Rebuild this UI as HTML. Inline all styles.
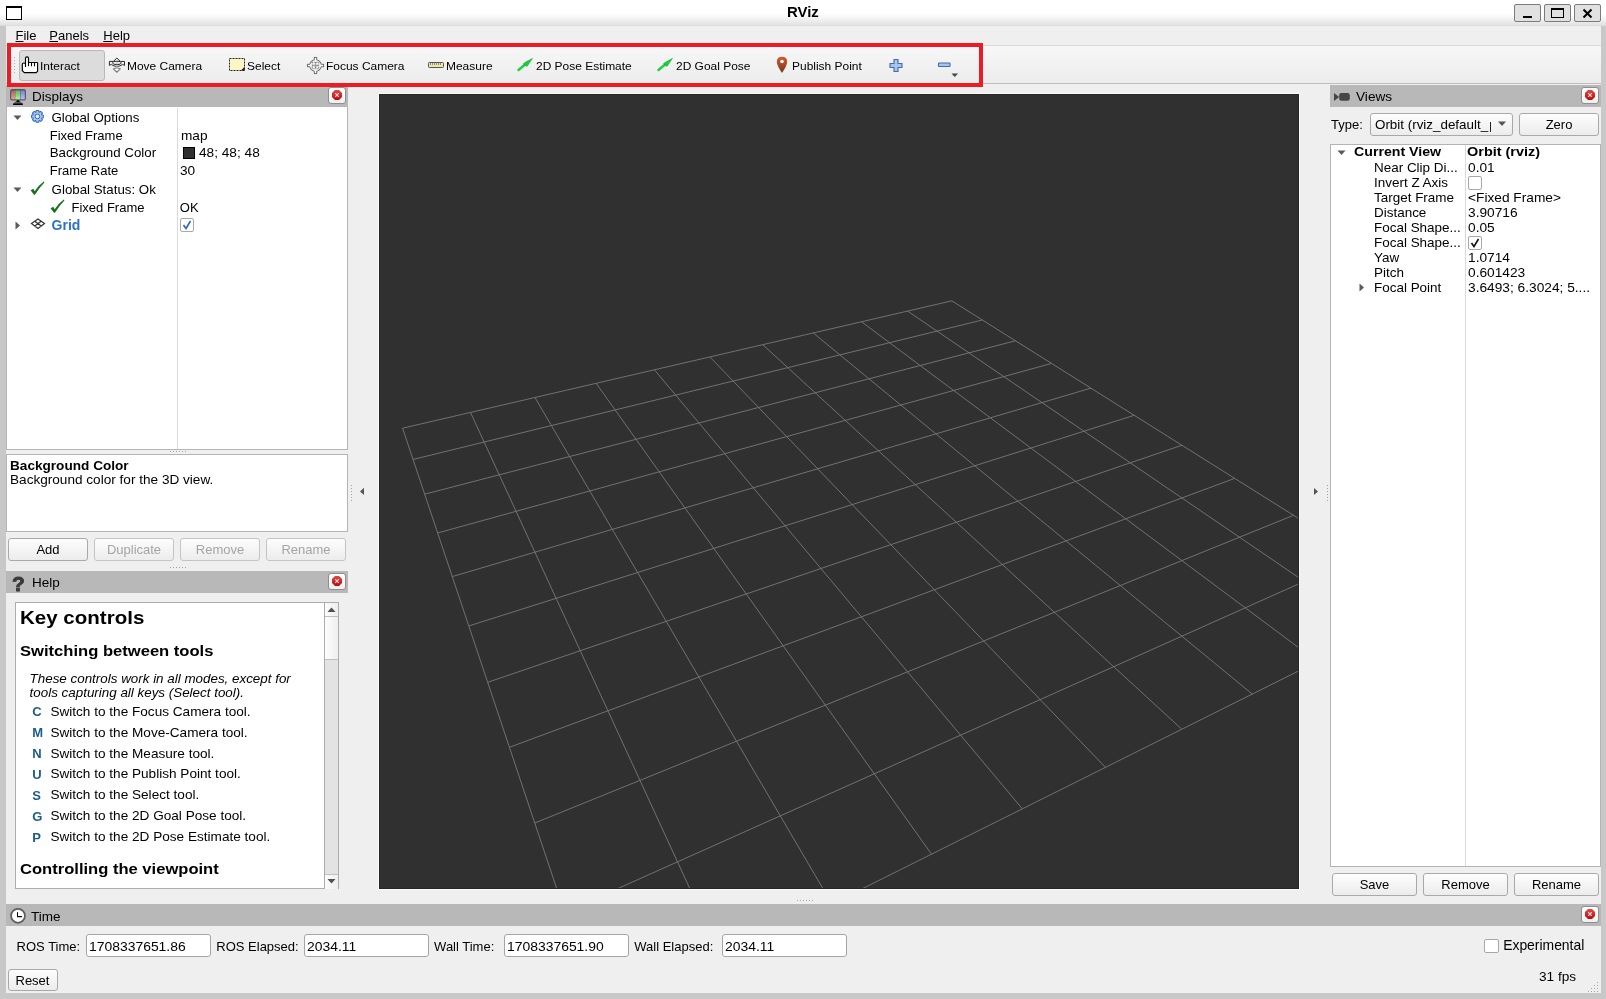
<!DOCTYPE html><html><head><meta charset="utf-8"><style>
html,body{margin:0;padding:0;}
body{width:1606px;height:999px;position:relative;overflow:hidden;background:#efefef;will-change:transform;font-family:"Liberation Sans", sans-serif;}
.t{position:absolute;white-space:nowrap;line-height:1;}
.btn{position:absolute;box-sizing:border-box;border:1px solid #a9a9a9;border-radius:3px;background:linear-gradient(#fdfdfd,#ececec);}
.cls{position:absolute;box-sizing:border-box;width:17px;height:16px;border:1px solid #8f8f8f;border-radius:3px;background:linear-gradient(#ffffff,#f0f0f0);}
.field{position:absolute;box-sizing:border-box;border:1px solid #a5a5a5;border-radius:3px;background:#fff;}
svg{position:absolute;overflow:visible;}
</style></head><body>
<div style="position:absolute;left:0px;top:0px;width:1606px;height:26px;background:linear-gradient(#ffffff 0px,#ffffff 14px,#f0f0f0 20px,#e2e2e2 25px,#d6d6d6 26px)"></div>
<div style="position:absolute;left:6px;top:6px;width:16px;height:14px;box-sizing:border-box;border:1px solid #000;border-top:2px solid #000;background:#fff"></div>
<div class="t" style="left:786.7px;top:4.53px;font-size:14.5px;font-weight:bold;color:#000;font-style:normal;transform:scaleX(1.03);transform-origin:0 0;">RViz</div>
<div style="position:absolute;left:1514px;top:4px;width:27px;height:18px;box-sizing:border-box;border:1px solid #7b7b7b;border-radius:2px;background:#e1e1e1"></div>
<div style="position:absolute;left:1544px;top:4px;width:27px;height:18px;box-sizing:border-box;border:1px solid #7b7b7b;border-radius:2px;background:#e1e1e1"></div>
<div style="position:absolute;left:1574px;top:4px;width:27px;height:18px;box-sizing:border-box;border:1px solid #7b7b7b;border-radius:2px;background:#e1e1e1"></div>
<svg style="left:0;top:0" width="1606" height="26"><rect x="1523" y="16" width="9" height="2" fill="#000"/><rect x="1551.5" y="8.5" width="12" height="9" fill="none" stroke="#000" stroke-width="1"/><rect x="1551" y="8" width="13" height="2" fill="#000"/><path d="M1583.5 9.5 L1591.5 17.5 M1591.5 9.5 L1583.5 17.5" stroke="#000" stroke-width="2"/></svg>
<div style="position:absolute;left:0px;top:26px;width:6px;height:973px;background:#c8c8c8"></div>
<div style="position:absolute;left:1601px;top:26px;width:5px;height:973px;background:#c8c8c8"></div>
<div style="position:absolute;left:0px;top:993px;width:1606px;height:6px;background:#c8c8c8"></div>
<div class="t" style="left:15.5px;top:28.80px;font-size:13px;font-weight:normal;color:#000;font-style:normal;"><u>F</u>ile</div>
<div class="t" style="left:49.3px;top:28.80px;font-size:13px;font-weight:normal;color:#000;font-style:normal;"><u>P</u>anels</div>
<div class="t" style="left:103.3px;top:28.80px;font-size:13px;font-weight:normal;color:#000;font-style:normal;"><u>H</u>elp</div>
<div style="position:absolute;left:6px;top:45px;width:1595px;height:39px;background:linear-gradient(#f7f7f7,#ececec);border-top:1px solid #d9d9d9;border-bottom:1px solid #bdbdbd;box-sizing:border-box"></div>
<svg style="left:0;top:0" width="20" height="84"><rect x="11" y="57" width="1" height="1" fill="#cfcfcf"/><rect x="14" y="57" width="1" height="1" fill="#a9a9a9"/><rect x="11" y="60" width="1" height="1" fill="#cfcfcf"/><rect x="14" y="60" width="1" height="1" fill="#a9a9a9"/><rect x="11" y="63" width="1" height="1" fill="#cfcfcf"/><rect x="14" y="63" width="1" height="1" fill="#a9a9a9"/><rect x="11" y="66" width="1" height="1" fill="#cfcfcf"/><rect x="14" y="66" width="1" height="1" fill="#a9a9a9"/><rect x="11" y="69" width="1" height="1" fill="#cfcfcf"/><rect x="14" y="69" width="1" height="1" fill="#a9a9a9"/><rect x="11" y="72" width="1" height="1" fill="#cfcfcf"/><rect x="14" y="72" width="1" height="1" fill="#a9a9a9"/></svg>
<div style="position:absolute;left:19px;top:50px;width:86px;height:31px;box-sizing:border-box;border:1px solid #b9b9b9;border-radius:3px;background:#dcdcdc"></div>
<svg style="left:21px;top:56px" width="18" height="18" viewBox="0 0 18 18"><path d="M4.5 11 V2.3 Q4.5 0.9 6 0.9 Q7.5 0.9 7.5 2.3 V6.5 H16 Q16.6 6.5 16.6 7.2 V15.2 L15.3 16.6 H3.3 L1.3 14.6 V8.3 Q1.3 7 2.9 7 Q4.5 7 4.5 8.3" fill="#fff" stroke="#000" stroke-width="1.15" stroke-linejoin="round"/><path d="M10.5 6.8 V10.2 M13.5 6.8 V10.2" stroke="#000" stroke-width="1.1" fill="none"/><path d="M7.5 6.8 V10.2" stroke="#000" stroke-width="1.1" fill="none"/></svg>
<div class="t" style="left:40.0px;top:61.07px;font-size:11.5px;font-weight:normal;color:#000;font-style:normal;transform:scaleX(1.04);transform-origin:0 0;">Interact</div>
<svg style="left:106px;top:55px" width="22" height="20" viewBox="0 0 22 20"><rect x="10.3" y="6.4" width="1.3" height="6.8" fill="#c4c4c4"/><g fill="none" stroke="#2a2a2a" stroke-width="1" stroke-linejoin="round"><path d="M7.4 6.4 L10.9 3.0 L14.4 6.4"/><path d="M7.4 6.4 H3.4 V10.4 L5.4 9.4"/><path d="M14.4 6.4 H18.5 V10.4 L16.5 9.4"/><ellipse cx="10.9" cy="7.9" rx="4.4" ry="1.7"/><path d="M5.4 9.6 Q10.9 13.2 16.5 9.6"/></g><path d="M7.6 14 L10.9 17.2 L14.2 14 L10.9 12.6 Z" fill="#fff" stroke="#7a7a7a" stroke-width="1.1"/><rect x="10.3" y="9.7" width="1.3" height="4" fill="#c4c4c4"/></svg>
<div class="t" style="left:126.5px;top:61.07px;font-size:11.5px;font-weight:normal;color:#000;font-style:normal;transform:scaleX(1.04);transform-origin:0 0;">Move Camera</div>
<svg style="left:228px;top:57px" width="18" height="15"><rect x="1.5" y="1.5" width="15" height="12" fill="#fbf6c4" stroke="#222" stroke-width="1" stroke-dasharray="2 1"/><path d="M13 13.5 L16.5 13.5 L16.5 10 Z" fill="#111"/></svg>
<div class="t" style="left:246.6px;top:61.07px;font-size:11.5px;font-weight:normal;color:#000;font-style:normal;transform:scaleX(1.04);transform-origin:0 0;">Select</div>
<svg style="left:306px;top:56px" width="19" height="19" viewBox="0 0 19 19"><g fill="#fff" stroke="#5e5e5e" stroke-width="1.7"><circle cx="9.5" cy="9.5" r="5.4"/><rect x="8.7" y="1.8" width="1.6" height="15.4"/><rect x="1.8" y="8.7" width="15.4" height="1.6"/></g><g fill="#fff"><circle cx="9.5" cy="9.5" r="5.4"/><rect x="8.7" y="1.8" width="1.6" height="15.4"/><rect x="1.8" y="8.7" width="15.4" height="1.6"/></g><g fill="none" stroke="#666" stroke-width="0.9" stroke-dasharray="0.9 0.5"><rect x="6.2" y="6.2" width="3" height="3"/><rect x="9.8" y="6.2" width="3" height="3"/><rect x="6.2" y="9.8" width="3" height="3"/><rect x="9.8" y="9.8" width="3" height="3"/></g></svg>
<div class="t" style="left:325.9px;top:61.07px;font-size:11.5px;font-weight:normal;color:#000;font-style:normal;transform:scaleX(1.04);transform-origin:0 0;">Focus Camera</div>
<svg style="left:427px;top:61px" width="18" height="8"><rect x="1.5" y="1.5" width="15" height="5" rx="0.8" fill="#f2e6a6" stroke="#555" stroke-width="1"/><path d="M3.5 2 V4 M5.5 2 V4 M7.5 2 V4 M9.5 2 V4 M11.5 2 V4 M13.5 2 V4" stroke="#777" stroke-width="0.8"/></svg>
<div class="t" style="left:445.9px;top:61.07px;font-size:11.5px;font-weight:normal;color:#000;font-style:normal;transform:scaleX(1.04);transform-origin:0 0;">Measure</div>
<svg style="left:517px;top:58px" width="18" height="14" viewBox="0 0 18 14"><path d="M1.5 12 L11 4" stroke="#17d43b" stroke-width="2.4" stroke-linecap="round"/><path d="M6.5 5.5 L15.5 0.3 L10 8.5 Z" fill="#14d63a" stroke="#0a7a20" stroke-width="0.4"/></svg>
<div class="t" style="left:535.7px;top:61.07px;font-size:11.5px;font-weight:normal;color:#000;font-style:normal;transform:scaleX(1.04);transform-origin:0 0;">2D Pose Estimate</div>
<svg style="left:657px;top:58px" width="18" height="14" viewBox="0 0 18 14"><path d="M1.5 12 L11 4" stroke="#17d43b" stroke-width="2.4" stroke-linecap="round"/><path d="M6.5 5.5 L15.5 0.3 L10 8.5 Z" fill="#14d63a" stroke="#0a7a20" stroke-width="0.4"/></svg>
<div class="t" style="left:675.5px;top:61.07px;font-size:11.5px;font-weight:normal;color:#000;font-style:normal;transform:scaleX(1.04);transform-origin:0 0;">2D Goal Pose</div>
<svg style="left:776px;top:56px" width="12" height="18" viewBox="0 0 12 18"><defs><linearGradient id="pg" x1="0" y1="0" x2="0" y2="1"><stop offset="0" stop-color="#e0552e"/><stop offset="1" stop-color="#6e3a1e"/></linearGradient></defs><path d="M6 17 Q1 9.5 0.8 6 Q0.8 0.8 6 0.8 Q11.2 0.8 11.2 6 Q11 9.5 6 17 Z" fill="url(#pg)"/><circle cx="6" cy="5.5" r="1.8" fill="#fff"/></svg>
<div class="t" style="left:791.6px;top:61.07px;font-size:11.5px;font-weight:normal;color:#000;font-style:normal;transform:scaleX(1.04);transform-origin:0 0;">Publish Point</div>
<svg style="left:888px;top:58px" width="70" height="22"><path d="M6 1.5 H10 V5.5 H14 V9.5 H10 V13.5 H6 V9.5 H2 V5.5 H6 Z" fill="#a9c6ea" stroke="#3c6db0" stroke-width="1.1"/><rect x="50.5" y="5" width="11.5" height="3.5" rx="0.6" fill="#a9c6ea" stroke="#3c6db0" stroke-width="1.1"/><path d="M63.5 15.5 H70 L66.75 19 Z" fill="#444"/></svg>
<div style="position:absolute;left:6px;top:85px;width:342px;height:22px;background:#b8b8b8"></div>
<svg style="left:6px;top:86px" width="22" height="22" viewBox="0 0 22 22"><defs><linearGradient id="gr" x1="0" y1="0" x2="0" y2="1"><stop offset="0" stop-color="#b06060"/><stop offset="1" stop-color="#ec9c9c"/></linearGradient><linearGradient id="gg" x1="0" y1="0" x2="0" y2="1"><stop offset="0" stop-color="#62b262"/><stop offset="1" stop-color="#aaf2a2"/></linearGradient><linearGradient id="gb" x1="0" y1="0" x2="0" y2="1"><stop offset="0" stop-color="#8080d0"/><stop offset="1" stop-color="#bcbcff"/></linearGradient></defs><rect x="4.5" y="3.6" width="15" height="10.6" rx="1.2" fill="#000"/><rect x="5.1" y="4.2" width="4.1" height="9.4" fill="url(#gr)"/><rect x="9.2" y="4.2" width="5.3" height="9.4" fill="url(#gg)"/><rect x="14.5" y="4.2" width="4.4" height="9.4" fill="url(#gb)"/><path d="M10.8 14.2 H13.2 L13.4 15.6 Q15.8 16 15.8 16.6 H8.2 Q8.2 16 10.6 15.6 Z" fill="#000"/><rect x="7" y="17.3" width="10" height="1.8" rx="0.9" fill="#000"/></svg>
<div class="t" style="left:31.5px;top:89.70px;font-size:13px;font-weight:normal;color:#000;font-style:normal;transform:scaleX(1.04);transform-origin:0 0;">Displays</div>
<div class="cls" style="left:328px;top:87px;width:18px;height:17px"></div>
<svg style="left:332px;top:90px" width="10" height="10" viewBox="0 0 10 10"><defs><linearGradient id="cg33290" x1="0" y1="0" x2="0" y2="1"><stop offset="0" stop-color="#e04848"/><stop offset="1" stop-color="#c00808"/></linearGradient></defs><path d="M3 0 H7 L10 3 V7 L7 10 H3 L0 7 V3 Z" fill="url(#cg33290)"/><path d="M3.2 3.2 L6.8 6.8 M6.8 3.2 L3.2 6.8" stroke="#f4dede" stroke-width="1.2"/></svg>
<div style="position:absolute;left:6px;top:107px;width:342px;height:343px;box-sizing:border-box;border:1px solid #b4b4b4;border-top:none;background:#fff"></div>
<div style="position:absolute;left:177px;top:108px;width:1px;height:341px;background:#dadada"></div>
<svg style="left:13px;top:114.5px" width="9" height="6"><path d="M0.5 0.5 H8.5 L4.5 5 Z" fill="#5a5a5a"/></svg>
<svg style="left:30px;top:109px" width="15" height="15" viewBox="0 0 15 15"><g transform="translate(7.45 7.4)"><path d="M-1.60 -4.21 L-1.25 -5.87 L1.25 -5.87 L1.60 -4.21 L1.84 -4.11 L3.27 -5.03 L5.03 -3.27 L4.11 -1.84 L4.21 -1.60 L5.87 -1.25 L5.87 1.25 L4.21 1.60 L4.11 1.84 L5.03 3.27 L3.27 5.03 L1.84 4.11 L1.60 4.21 L1.25 5.87 L-1.25 5.87 L-1.60 4.21 L-1.84 4.11 L-3.27 5.03 L-5.03 3.27 L-4.11 1.84 L-4.21 1.60 L-5.87 1.25 L-5.87 -1.25 L-4.21 -1.60 L-4.11 -1.84 L-5.03 -3.27 L-3.27 -5.03 L-1.84 -4.11 Z" fill="#aec6e8" stroke="#2f6fc4" stroke-width="1.05" stroke-linejoin="round"/><circle r="2.4" fill="#d6e2f2" stroke="#2f6fc4" stroke-width="1"/><circle r="0.9" fill="#fff"/></g></svg>
<div class="t" style="left:51.4px;top:110.54px;font-size:13.3px;font-weight:normal;color:#000;font-style:normal;">Global Options</div>
<div class="t" style="left:49.7px;top:128.70px;font-size:13px;font-weight:normal;color:#000;font-style:normal;">Fixed Frame</div>
<div class="t" style="left:180.5px;top:128.70px;font-size:13px;font-weight:normal;color:#000;font-style:normal;transform:scaleX(1.05);transform-origin:0 0;">map</div>
<div class="t" style="left:49.7px;top:146.14px;font-size:13.3px;font-weight:normal;color:#000;font-style:normal;">Background Color</div>
<div style="position:absolute;left:183px;top:147px;width:12px;height:12px;box-sizing:border-box;border:1px solid #000;background:#303030"></div>
<div class="t" style="left:199.3px;top:146.40px;font-size:13px;font-weight:normal;color:#000;font-style:normal;transform:scaleX(1.05);transform-origin:0 0;">48; 48; 48</div>
<div class="t" style="left:49.7px;top:164.30px;font-size:13px;font-weight:normal;color:#000;font-style:normal;">Frame Rate</div>
<div class="t" style="left:180.0px;top:164.30px;font-size:13px;font-weight:normal;color:#000;font-style:normal;transform:scaleX(1.05);transform-origin:0 0;">30</div>
<svg style="left:13px;top:186.5px" width="9" height="6"><path d="M0.5 0.5 H8.5 L4.5 5 Z" fill="#5a5a5a"/></svg>
<svg style="left:28px;top:180px" width="18" height="16" viewBox="0 0 18 16"><path d="M2.6 10.2 L5.3 8.7 L6.7 11.2 Q10.5 5.5 15.8 1.6 L16.4 2.5 Q11.5 7.5 7.3 14.3 L6.2 15 Z" fill="#17701a"/></svg>
<div class="t" style="left:51.6px;top:182.64px;font-size:13.3px;font-weight:normal;color:#000;font-style:normal;">Global Status: Ok</div>
<svg style="left:48px;top:198px" width="18" height="16" viewBox="0 0 18 16"><path d="M2.6 10.2 L5.3 8.7 L6.7 11.2 Q10.5 5.5 15.8 1.6 L16.4 2.5 Q11.5 7.5 7.3 14.3 L6.2 15 Z" fill="#17701a"/></svg>
<div class="t" style="left:71.5px;top:200.90px;font-size:13px;font-weight:normal;color:#000;font-style:normal;">Fixed Frame</div>
<div class="t" style="left:179.8px;top:200.90px;font-size:13px;font-weight:normal;color:#000;font-style:normal;">OK</div>
<svg style="left:15px;top:221px" width="6" height="9"><path d="M0.5 0.5 V8.5 L5 4.5 Z" fill="#5a5a5a"/></svg>
<svg style="left:30px;top:218px" width="16" height="12" viewBox="0 0 16 12"><path d="M8 1 L14.5 5.5 L8 10.5 L1.5 5.5 Z M4.8 3.2 L11.2 8 M11.2 3.2 L4.8 8" fill="none" stroke="#333" stroke-width="1.2"/></svg>
<div class="t" style="left:51.6px;top:217.95px;font-size:14px;font-weight:bold;color:#2b73c7;font-style:normal;">Grid</div>
<div style="position:absolute;left:180px;top:218px;width:14px;height:14px;box-sizing:border-box;border:1px solid #a8a8a8;border-radius:2px;background:#fff"></div>
<svg style="left:182px;top:220px" width="10" height="10"><path d="M1.5 5 L4 8.5 L8.5 1" fill="none" stroke="#2b68b5" stroke-width="1.6"/></svg>
<svg style="left:0;top:0" width="360" height="570"><rect x="170" y="451" width="1" height="1" fill="#a0a0a0"/><rect x="173" y="451" width="1" height="1" fill="#a0a0a0"/><rect x="176" y="451" width="1" height="1" fill="#a0a0a0"/><rect x="179" y="451" width="1" height="1" fill="#a0a0a0"/><rect x="182" y="451" width="1" height="1" fill="#a0a0a0"/><rect x="185" y="451" width="1" height="1" fill="#a0a0a0"/><rect x="170" y="567" width="1" height="1" fill="#a0a0a0"/><rect x="173" y="567" width="1" height="1" fill="#a0a0a0"/><rect x="176" y="567" width="1" height="1" fill="#a0a0a0"/><rect x="179" y="567" width="1" height="1" fill="#a0a0a0"/><rect x="182" y="567" width="1" height="1" fill="#a0a0a0"/><rect x="185" y="567" width="1" height="1" fill="#a0a0a0"/></svg>
<div style="position:absolute;left:6px;top:454px;width:342px;height:78px;box-sizing:border-box;border:1px solid #b4b4b4;background:#fff"></div>
<div class="t" style="left:10.0px;top:460.13px;font-size:12.6px;font-weight:bold;color:#000;font-style:normal;transform:scaleX(1.08);transform-origin:0 0;">Background Color</div>
<div class="t" style="left:10.0px;top:473.49px;font-size:13.6px;font-weight:normal;color:#000;font-style:normal;">Background color for the 3D view.</div>
<div class="btn" style="left:8px;top:538px;width:80px;height:23px;"></div>
<div class="t" style="left:8px;top:542.80px;width:80px;text-align:center;font-size:13px;color:#000">Add</div>
<div class="btn" style="left:94px;top:538px;width:80px;height:23px;border-color:#c4c4c4;"></div>
<div class="t" style="left:94px;top:542.80px;width:80px;text-align:center;font-size:13px;color:#a4a4a4">Duplicate</div>
<div class="btn" style="left:180px;top:538px;width:80px;height:23px;border-color:#c4c4c4;"></div>
<div class="t" style="left:180px;top:542.80px;width:80px;text-align:center;font-size:13px;color:#a4a4a4">Remove</div>
<div class="btn" style="left:266px;top:538px;width:80px;height:23px;border-color:#c4c4c4;"></div>
<div class="t" style="left:266px;top:542.80px;width:80px;text-align:center;font-size:13px;color:#a4a4a4">Rename</div>
<div style="position:absolute;left:6px;top:571px;width:342px;height:22px;background:#b8b8b8"></div>
<div class="t" style="left:12.0px;top:573.22px;font-size:21px;font-weight:bold;color:#3a3a3a;font-style:normal;-webkit-text-stroke:0.9px #3a3a3a;">?</div>
<div class="t" style="left:31.8px;top:576.00px;font-size:13px;font-weight:normal;color:#000;font-style:normal;transform:scaleX(1.04);transform-origin:0 0;">Help</div>
<div class="cls" style="left:328px;top:573px;width:18px;height:17px"></div>
<svg style="left:332px;top:576px" width="10" height="10" viewBox="0 0 10 10"><defs><linearGradient id="cg332576" x1="0" y1="0" x2="0" y2="1"><stop offset="0" stop-color="#e04848"/><stop offset="1" stop-color="#c00808"/></linearGradient></defs><path d="M3 0 H7 L10 3 V7 L7 10 H3 L0 7 V3 Z" fill="url(#cg332576)"/><path d="M3.2 3.2 L6.8 6.8 M6.8 3.2 L3.2 6.8" stroke="#f4dede" stroke-width="1.2"/></svg>
<div style="position:absolute;left:15px;top:602px;width:324px;height:287px;box-sizing:border-box;border:1px solid #adadad;background:#fff"></div>
<div style="position:absolute;left:324px;top:602px;width:15px;height:287px;box-sizing:border-box;border:1px solid #adadad;background:#e3e3e3"></div>
<div style="position:absolute;left:325px;top:603px;width:13px;height:13px;background:linear-gradient(90deg,#fcfcfc,#efefef);border-bottom:1px solid #c0c0c0"></div>
<div style="position:absolute;left:325px;top:617px;width:13px;height:42px;background:linear-gradient(90deg,#fdfdfd,#efefef);border-bottom:1px solid #c0c0c0"></div>
<div style="position:absolute;left:325px;top:874px;width:13px;height:14px;background:linear-gradient(90deg,#fcfcfc,#efefef);border-top:1px solid #c0c0c0"></div>
<svg style="left:324px;top:602px" width="15" height="287"><path d="M3.5 10 H11.5 L7.5 5.6 Z" fill="#505050"/><path d="M3.5 277 H11.5 L7.5 281.5 Z" fill="#505050"/></svg>
<div class="t" style="left:19.8px;top:607.92px;font-size:19px;font-weight:bold;color:#000;font-style:normal;transform:scaleX(1.08);transform-origin:0 0;">Key controls</div>
<div class="t" style="left:19.8px;top:643.64px;font-size:14.6px;font-weight:bold;color:#000;font-style:normal;transform:scaleX(1.136);transform-origin:0 0;">Switching between tools</div>
<div class="t" style="left:29.6px;top:672.16px;font-size:13.4px;font-weight:normal;color:#000;font-style:italic;">These controls work in all modes, except for</div>
<div class="t" style="left:29.6px;top:685.96px;font-size:13.4px;font-weight:normal;color:#000;font-style:italic;">tools capturing all keys (Select tool).</div>
<div class="t" style="left:32.3px;top:705.20px;font-size:13px;font-weight:bold;color:#1b5d88;font-style:normal;">C</div>
<div class="t" style="left:50.4px;top:704.69px;font-size:13.6px;font-weight:normal;color:#000;font-style:normal;">Switch to the Focus Camera tool.</div>
<div class="t" style="left:32.3px;top:726.12px;font-size:13px;font-weight:bold;color:#1b5d88;font-style:normal;">M</div>
<div class="t" style="left:50.4px;top:725.61px;font-size:13.6px;font-weight:normal;color:#000;font-style:normal;">Switch to the Move-Camera tool.</div>
<div class="t" style="left:32.3px;top:747.04px;font-size:13px;font-weight:bold;color:#1b5d88;font-style:normal;">N</div>
<div class="t" style="left:50.4px;top:746.53px;font-size:13.6px;font-weight:normal;color:#000;font-style:normal;">Switch to the Measure tool.</div>
<div class="t" style="left:32.3px;top:767.96px;font-size:13px;font-weight:bold;color:#1b5d88;font-style:normal;">U</div>
<div class="t" style="left:50.4px;top:767.45px;font-size:13.6px;font-weight:normal;color:#000;font-style:normal;">Switch to the Publish Point tool.</div>
<div class="t" style="left:32.3px;top:788.88px;font-size:13px;font-weight:bold;color:#1b5d88;font-style:normal;">S</div>
<div class="t" style="left:50.4px;top:788.37px;font-size:13.6px;font-weight:normal;color:#000;font-style:normal;">Switch to the Select tool.</div>
<div class="t" style="left:32.3px;top:809.80px;font-size:13px;font-weight:bold;color:#1b5d88;font-style:normal;">G</div>
<div class="t" style="left:50.4px;top:809.29px;font-size:13.6px;font-weight:normal;color:#000;font-style:normal;">Switch to the 2D Goal Pose tool.</div>
<div class="t" style="left:32.3px;top:830.72px;font-size:13px;font-weight:bold;color:#1b5d88;font-style:normal;">P</div>
<div class="t" style="left:50.4px;top:830.21px;font-size:13.6px;font-weight:normal;color:#000;font-style:normal;">Switch to the 2D Pose Estimate tool.</div>
<div class="t" style="left:20.0px;top:861.74px;font-size:14.6px;font-weight:bold;color:#000;font-style:normal;transform:scaleX(1.135);transform-origin:0 0;">Controlling the viewpoint</div>
<div style="position:absolute;left:378px;top:93px;width:922px;height:797px;background:#fafafa"></div>
<svg style="left:379px;top:94px;overflow:hidden" width="920" height="795"><rect x="0" y="0" width="920" height="795" fill="#303030"/><g stroke="#717173" stroke-width="1" fill="none"><line x1="572.80" y1="206.83" x2="1054.95" y2="509.42"/><line x1="572.80" y1="206.83" x2="23.58" y2="334.19"/><line x1="528.62" y1="217.07" x2="998.77" y2="537.45"/><line x1="603.34" y1="225.99" x2="34.05" y2="365.46"/><line x1="482.48" y1="227.77" x2="938.37" y2="567.59"/><line x1="636.46" y1="246.78" x2="45.68" y2="400.19"/><line x1="434.24" y1="238.96" x2="873.26" y2="600.09"/><line x1="672.53" y1="269.42" x2="58.66" y2="438.98"/><line x1="383.75" y1="250.67" x2="802.85" y2="635.23"/><line x1="711.94" y1="294.15" x2="73.26" y2="482.58"/><line x1="330.87" y1="262.93" x2="726.48" y2="673.34"/><line x1="755.20" y1="321.30" x2="89.79" y2="531.96"/><line x1="275.40" y1="275.79" x2="643.35" y2="714.83"/><line x1="802.88" y1="351.22" x2="108.67" y2="588.33"/><line x1="217.17" y1="289.30" x2="552.53" y2="760.15"/><line x1="855.70" y1="384.37" x2="130.42" y2="653.30"/><line x1="155.94" y1="303.49" x2="452.90" y2="809.88"/><line x1="914.54" y1="421.30" x2="155.77" y2="729.01"/><line x1="91.50" y1="318.44" x2="343.10" y2="864.67"/><line x1="980.50" y1="462.69" x2="185.68" y2="818.34"/><line x1="23.58" y1="334.19" x2="221.51" y2="925.35"/><line x1="1054.95" y1="509.42" x2="221.51" y2="925.35"/></g></svg>
<div style="position:absolute;left:379px;top:94px;width:920px;height:795px;box-sizing:border-box;border:1px solid #262626"></div>
<svg style="left:340px;top:480px" width="30" height="25"><path d="M24 7.8 V15 L20 11.4 Z" fill="#555"/></svg>
<svg style="left:1300px;top:480px" width="30" height="25"><path d="M14 8 V15 L18 11.5 Z" fill="#555"/></svg>
<svg style="left:0;top:0" width="1606" height="999"><rect x="351" y="485" width="1" height="1" fill="#a0a0a0"/><rect x="1327" y="485" width="1" height="1" fill="#a0a0a0"/><rect x="351" y="488" width="1" height="1" fill="#a0a0a0"/><rect x="1327" y="488" width="1" height="1" fill="#a0a0a0"/><rect x="351" y="491" width="1" height="1" fill="#a0a0a0"/><rect x="1327" y="491" width="1" height="1" fill="#a0a0a0"/><rect x="351" y="494" width="1" height="1" fill="#a0a0a0"/><rect x="1327" y="494" width="1" height="1" fill="#a0a0a0"/><rect x="351" y="497" width="1" height="1" fill="#a0a0a0"/><rect x="1327" y="497" width="1" height="1" fill="#a0a0a0"/><rect x="351" y="500" width="1" height="1" fill="#a0a0a0"/><rect x="1327" y="500" width="1" height="1" fill="#a0a0a0"/><rect x="797" y="900" width="1" height="1" fill="#a8a8a8"/><rect x="800" y="900" width="1" height="1" fill="#a8a8a8"/><rect x="803" y="900" width="1" height="1" fill="#a8a8a8"/><rect x="806" y="900" width="1" height="1" fill="#a8a8a8"/><rect x="809" y="900" width="1" height="1" fill="#a8a8a8"/><rect x="812" y="900" width="1" height="1" fill="#a8a8a8"/></svg>
<div style="position:absolute;left:1330px;top:85px;width:271px;height:22px;background:#b8b8b8"></div>
<svg style="left:1333px;top:92px" width="18" height="10" viewBox="0 0 18 10"><path d="M1 0.9 L6.2 4.9 L1 9 Z" fill="#454545"/><rect x="6.2" y="1" width="10.6" height="7.8" rx="2.2" fill="#454545"/></svg>
<div class="t" style="left:1355.8px;top:90.00px;font-size:13px;font-weight:normal;color:#000;font-style:normal;transform:scaleX(1.05);transform-origin:0 0;">Views</div>
<div class="cls" style="left:1581px;top:87px;width:18px;height:17px"></div>
<svg style="left:1585px;top:90px" width="10" height="10" viewBox="0 0 10 10"><defs><linearGradient id="cg158590" x1="0" y1="0" x2="0" y2="1"><stop offset="0" stop-color="#e04848"/><stop offset="1" stop-color="#c00808"/></linearGradient></defs><path d="M3 0 H7 L10 3 V7 L7 10 H3 L0 7 V3 Z" fill="url(#cg158590)"/><path d="M3.2 3.2 L6.8 6.8 M6.8 3.2 L3.2 6.8" stroke="#f4dede" stroke-width="1.2"/></svg>
<div class="t" style="left:1331.0px;top:117.50px;font-size:13px;font-weight:normal;color:#000;font-style:normal;">Type:</div>
<div class="btn" style="left:1370px;top:113px;width:143px;height:23px;"></div>
<div class="t" style="left:1375.0px;top:117.50px;font-size:13px;font-weight:normal;color:#000;font-style:normal;transform:scaleX(1.03);transform-origin:0 0;">Orbit (rviz_default_</div>
<div style="position:absolute;left:1490px;top:122px;width:1px;height:10px;background:#222"></div>
<svg style="left:1496.5px;top:120px" width="10" height="8"><path d="M1 1.5 H9 L5 6 Z" fill="#555"/></svg>
<div class="btn" style="left:1519px;top:113px;width:80px;height:23px;"></div>
<div class="t" style="left:1519px;top:117.50px;width:80px;text-align:center;font-size:13px;">Zero</div>
<div style="position:absolute;left:1330px;top:144px;width:271px;height:723px;box-sizing:border-box;border:1px solid #b4b4b4;background:#fff"></div>
<div style="position:absolute;left:1465px;top:145px;width:1px;height:721px;background:#dadada"></div>
<svg style="left:1337px;top:150px" width="9" height="6"><path d="M0.5 0.5 H8.5 L4.5 5 Z" fill="#5a5a5a"/></svg>
<div class="t" style="left:1353.5px;top:146.26px;font-size:12.8px;font-weight:bold;color:#000;font-style:normal;transform:scaleX(1.107);transform-origin:0 0;">Current View</div>
<div class="t" style="left:1467.0px;top:146.26px;font-size:12.8px;font-weight:bold;color:#000;font-style:normal;transform:scaleX(1.13);transform-origin:0 0;">Orbit (rviz)</div>
<div class="t" style="left:1373.5px;top:161.40px;font-size:13px;font-weight:normal;color:#000;font-style:normal;transform:scaleX(1.035);transform-origin:0 0;">Near Clip Di...</div>
<div class="t" style="left:1467.8px;top:161.40px;font-size:13px;font-weight:normal;color:#000;font-style:normal;transform:scaleX(1.055);transform-origin:0 0;">0.01</div>
<div class="t" style="left:1373.5px;top:176.40px;font-size:13px;font-weight:normal;color:#000;font-style:normal;transform:scaleX(1.035);transform-origin:0 0;">Invert Z Axis</div>
<div style="position:absolute;left:1468px;top:176px;width:14px;height:14px;box-sizing:border-box;border:1px solid #a8a8a8;border-radius:2px;background:#fff"></div>
<div class="t" style="left:1373.5px;top:191.40px;font-size:13px;font-weight:normal;color:#000;font-style:normal;transform:scaleX(1.035);transform-origin:0 0;">Target Frame</div>
<div class="t" style="left:1467.8px;top:191.40px;font-size:13px;font-weight:normal;color:#000;font-style:normal;transform:scaleX(1.055);transform-origin:0 0;">&lt;Fixed Frame&gt;</div>
<div class="t" style="left:1373.5px;top:206.40px;font-size:13px;font-weight:normal;color:#000;font-style:normal;transform:scaleX(1.035);transform-origin:0 0;">Distance</div>
<div class="t" style="left:1467.8px;top:206.40px;font-size:13px;font-weight:normal;color:#000;font-style:normal;transform:scaleX(1.055);transform-origin:0 0;">3.90716</div>
<div class="t" style="left:1373.5px;top:221.40px;font-size:13px;font-weight:normal;color:#000;font-style:normal;transform:scaleX(1.035);transform-origin:0 0;">Focal Shape...</div>
<div class="t" style="left:1467.8px;top:221.40px;font-size:13px;font-weight:normal;color:#000;font-style:normal;transform:scaleX(1.055);transform-origin:0 0;">0.05</div>
<div class="t" style="left:1373.5px;top:236.40px;font-size:13px;font-weight:normal;color:#000;font-style:normal;transform:scaleX(1.035);transform-origin:0 0;">Focal Shape...</div>
<div style="position:absolute;left:1468px;top:236px;width:14px;height:14px;box-sizing:border-box;border:1px solid #a8a8a8;border-radius:2px;background:#fff"></div>
<svg style="left:1470px;top:238px" width="10" height="10"><path d="M1.5 5 L4 8.5 L8.5 1" fill="none" stroke="#111" stroke-width="1.6"/></svg>
<div class="t" style="left:1373.5px;top:251.40px;font-size:13px;font-weight:normal;color:#000;font-style:normal;transform:scaleX(1.035);transform-origin:0 0;">Yaw</div>
<div class="t" style="left:1467.8px;top:251.40px;font-size:13px;font-weight:normal;color:#000;font-style:normal;transform:scaleX(1.055);transform-origin:0 0;">1.0714</div>
<div class="t" style="left:1373.5px;top:266.40px;font-size:13px;font-weight:normal;color:#000;font-style:normal;transform:scaleX(1.035);transform-origin:0 0;">Pitch</div>
<div class="t" style="left:1467.8px;top:266.40px;font-size:13px;font-weight:normal;color:#000;font-style:normal;transform:scaleX(1.055);transform-origin:0 0;">0.601423</div>
<div class="t" style="left:1373.5px;top:281.40px;font-size:13px;font-weight:normal;color:#000;font-style:normal;transform:scaleX(1.035);transform-origin:0 0;">Focal Point</div>
<div class="t" style="left:1467.8px;top:281.40px;font-size:13px;font-weight:normal;color:#000;font-style:normal;transform:scaleX(1.055);transform-origin:0 0;">3.6493; 6.3024; 5....</div>
<svg style="left:1359px;top:283px" width="6" height="9"><path d="M0.5 0.5 V8.5 L5 4.5 Z" fill="#5a5a5a"/></svg>
<div class="btn" style="left:1332px;top:873px;width:85px;height:23px;"></div>
<div class="t" style="left:1332px;top:877.50px;width:85px;text-align:center;font-size:13px;">Save</div>
<div class="btn" style="left:1423px;top:873px;width:85px;height:23px;"></div>
<div class="t" style="left:1423px;top:877.50px;width:85px;text-align:center;font-size:13px;">Remove</div>
<div class="btn" style="left:1514px;top:873px;width:85px;height:23px;"></div>
<div class="t" style="left:1514px;top:877.50px;width:85px;text-align:center;font-size:13px;">Rename</div>
<div style="position:absolute;left:6px;top:904px;width:1595px;height:22px;background:#b8b8b8"></div>
<svg style="left:9px;top:906px" width="18" height="19" viewBox="0 0 18 19"><circle cx="9" cy="9.8" r="6.95" fill="#fff" stroke="#5e5e5e" stroke-width="1.75"/><path d="M8.5 6.6 V10.6 H12.6" fill="none" stroke="#000" stroke-width="1.05" stroke-linecap="round" stroke-linejoin="round"/></svg>
<div class="t" style="left:31.1px;top:909.50px;font-size:13px;font-weight:normal;color:#000;font-style:normal;transform:scaleX(1.04);transform-origin:0 0;">Time</div>
<div class="cls" style="left:1581px;top:906px;width:18px;height:17px"></div>
<svg style="left:1585px;top:909px" width="10" height="10" viewBox="0 0 10 10"><defs><linearGradient id="cg1585909" x1="0" y1="0" x2="0" y2="1"><stop offset="0" stop-color="#e04848"/><stop offset="1" stop-color="#c00808"/></linearGradient></defs><path d="M3 0 H7 L10 3 V7 L7 10 H3 L0 7 V3 Z" fill="url(#cg1585909)"/><path d="M3.2 3.2 L6.8 6.8 M6.8 3.2 L3.2 6.8" stroke="#f4dede" stroke-width="1.2"/></svg>
<div class="t" style="left:16.6px;top:939.80px;font-size:13px;font-weight:normal;color:#000;font-style:normal;">ROS Time:</div>
<div class="field" style="left:86px;top:934px;width:125px;height:23px;"></div>
<div class="t" style="left:88.7px;top:939.50px;font-size:13px;font-weight:normal;color:#000;font-style:normal;transform:scaleX(1.07);transform-origin:0 0;">1708337651.86</div>
<div class="field" style="left:304px;top:934px;width:125px;height:23px;"></div>
<div class="t" style="left:306.7px;top:939.50px;font-size:13px;font-weight:normal;color:#000;font-style:normal;transform:scaleX(1.07);transform-origin:0 0;">2034.11</div>
<div class="field" style="left:504px;top:934px;width:125px;height:23px;"></div>
<div class="t" style="left:506.7px;top:939.50px;font-size:13px;font-weight:normal;color:#000;font-style:normal;transform:scaleX(1.07);transform-origin:0 0;">1708337651.90</div>
<div class="field" style="left:722px;top:934px;width:125px;height:23px;"></div>
<div class="t" style="left:724.7px;top:939.50px;font-size:13px;font-weight:normal;color:#000;font-style:normal;transform:scaleX(1.07);transform-origin:0 0;">2034.11</div>
<div class="t" style="left:216.3px;top:939.80px;font-size:13px;font-weight:normal;color:#000;font-style:normal;">ROS Elapsed:</div>
<div class="t" style="left:434.1px;top:939.80px;font-size:13px;font-weight:normal;color:#000;font-style:normal;">Wall Time:</div>
<div class="t" style="left:634.3px;top:939.80px;font-size:13px;font-weight:normal;color:#000;font-style:normal;">Wall Elapsed:</div>
<div style="position:absolute;left:1484px;top:939px;width:15px;height:14px;box-sizing:border-box;border:1px solid #a8a8a8;border-radius:2px;background:#fff"></div>
<div class="t" style="left:1503.2px;top:938.73px;font-size:13.9px;font-weight:normal;color:#000;font-style:normal;">Experimental</div>
<div class="btn" style="left:8px;top:969px;width:50px;height:22px;"></div>
<div class="t" style="left:15.5px;top:974.00px;font-size:13px;font-weight:normal;color:#000;font-style:normal;">Reset</div>
<div class="t" style="left:1539.4px;top:970.00px;font-size:13px;font-weight:normal;color:#000;font-style:normal;transform:scaleX(1.05);transform-origin:0 0;">31 fps</div>
<svg style="left:1585px;top:980px" width="14" height="13"><rect x="12" y="11" width="1" height="1" fill="#a8a8a8"/><rect x="9" y="11" width="1" height="1" fill="#a8a8a8"/><rect x="6" y="11" width="1" height="1" fill="#a8a8a8"/><rect x="3" y="11" width="1" height="1" fill="#a8a8a8"/><rect x="12" y="8" width="1" height="1" fill="#a8a8a8"/><rect x="9" y="8" width="1" height="1" fill="#a8a8a8"/><rect x="6" y="8" width="1" height="1" fill="#a8a8a8"/><rect x="12" y="5" width="1" height="1" fill="#a8a8a8"/><rect x="9" y="5" width="1" height="1" fill="#a8a8a8"/><rect x="12" y="2" width="1" height="1" fill="#a8a8a8"/></svg>
<div style="position:absolute;left:7px;top:43px;width:976px;height:44px;box-sizing:border-box;border:4px solid #ec1c24"></div>
</body></html>
